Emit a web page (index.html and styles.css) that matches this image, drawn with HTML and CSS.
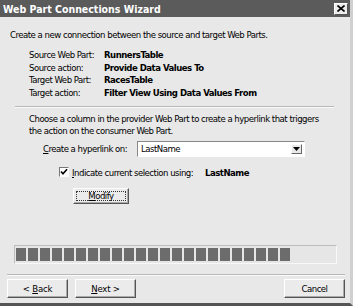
FILE: index.html
```html
<!DOCTYPE html>
<html>
<head>
<meta charset="utf-8">
<link rel="stylesheet" href="styles.css">
</head>
<body>
<div class="window">
  <div class="titlebar">
    <span class="title">Web Part Connections Wizard</span>
    <span class="close">
      <svg width="8" height="7" viewBox="0 0 8 7"><path d="M0.5 0.5L7.5 6.5M7.5 0.5L0.5 6.5" stroke="#000" stroke-width="1.6"/></svg>
    </span>
  </div>
  <div class="content">
    <p class="intro">Create a new connection between the source and target Web Parts.</p>
    <div class="info">
      <span class="lbl">Source Web Part:</span><span class="val">RunnersTable</span>
      <span class="lbl">Source action:</span><span class="val">Provide Data Values To</span>
      <span class="lbl">Target Web Part:</span><span class="val">RacesTable</span>
      <span class="lbl">Target action:</span><span class="val">Filter View Using Data Values From</span>
    </div>
    <div class="sep"></div>
    <p class="choose">Choose a column in the provider Web Part to create a hyperlink that triggers<br>the action on the consumer Web Part.</p>
    <div class="hyper">
      <span class="hlabel"><u>C</u>reate a hyperlink on:</span>
      <div class="select">
        <span class="selval">LastName</span>
        <span class="arrow"><svg width="7" height="4" viewBox="0 0 7 4"><path d="M0 0H7L3.5 4Z" fill="#000"/></svg></span>
      </div>
    </div>
    <div class="check">
      <span class="box"><svg width="8" height="8" viewBox="0 0 8 8"><path d="M1 3.5L3 5.8L7 1.2" stroke="#000" stroke-width="1.6" fill="none"/></svg></span>
      <span class="clabel"><u>I</u>ndicate current selection using:</span>
      <span class="cval">LastName</span>
    </div>
    <div class="modrow"><button class="btn modify"><span class="focus"><u>M</u>odify</span></button></div>
    <div class="progress">
      <div class="blk"></div><div class="blk"></div><div class="blk"></div><div class="blk"></div><div class="blk"></div><div class="blk"></div><div class="blk"></div><div class="blk"></div><div class="blk"></div><div class="blk"></div><div class="blk"></div><div class="blk"></div><div class="blk"></div><div class="blk"></div><div class="blk"></div><div class="blk"></div><div class="blk"></div><div class="blk"></div><div class="blk"></div><div class="blk"></div><div class="blk"></div><div class="blk"></div><div class="blk"></div>
    </div>
  </div>
  <div class="footer">
    <button class="btn nav"><span class="bt">&lt;&nbsp;<u>B</u>ack</span></button>
    <button class="btn nav"><span class="bt"><u>N</u>ext&nbsp;&gt;</span></button>
    <span class="spacer"></span>
    <button class="btn nav">Cancel</button>
  </div>
</div>
</body>
</html>
```
FILE: styles.css
```css
* { box-sizing: border-box; }
html, body { margin: 0; padding: 0; background: #e8e8e8; }
body { font-family: "DejaVu Sans Condensed", "DejaVu Sans", sans-serif; font-size: 9.5px; letter-spacing: -0.5px; color: #000; }
.window {
  width: 353px; height: 306px;
  background: #e8e8e8;
  border-right: 3px solid #d0d0d0;
  border-bottom: 3px solid #555;
  display: flex; flex-direction: column;
  overflow: hidden;
}
.titlebar {
  height: 17px; flex: none; background: #5b5b5b;
  display: flex; align-items: center; justify-content: space-between;
  padding: 0 2px 0 3px;
}
.title { color: #fff; font-weight: bold; font-size: 10.5px; letter-spacing: 0; }
.close {
  width: 14px; height: 12px; background: #ececec;
  border: 1px solid; border-color: #fff #555 #555 #fff;
  display: flex; align-items: center; justify-content: center;
}
.close svg { display: block; }
.content { flex: 1; padding: 11px 16px 0 10px; display: flex; flex-direction: column; white-space: nowrap; }
p { margin: 0; }
.intro { line-height: 13px; }
.info {
  display: grid; grid-template-columns: 75px auto;
  margin: 8px 0 0 19px; line-height: 12.7px;
}
.val { font-weight: bold; }
.sep { height: 2px; flex: none; border-top: 1px solid #b8b8b8; border-bottom: 1px solid #fafafa; margin: 6px 0 0 5px; }
.choose { margin: 5px 0 0 19px; line-height: 12px; }
.hyper { display: flex; align-items: center; margin: 4px 0 0 33px; }
.hlabel { width: 94px; }
.select {
  width: 168px; height: 16px; background: #fff;
  border: 1px solid; border-color: #888 #fff #fff #888;
  display: flex; align-items: center; justify-content: space-between;
  padding: 0 2px 0 3px;
}
.arrow {
  width: 11px; height: 10px; background: #e8e8e8;
  border: 1px solid; border-color: #fff #666 #666 #fff;
  display: flex; align-items: center; justify-content: center;
}
.arrow svg { display: block; }
.check { display: flex; align-items: center; margin: 10px 0 0 49px; }
.box {
  width: 10px; height: 10px; background: #fff;
  border: 1px solid; border-color: #777 #fff #fff #777;
  display: flex; align-items: center; justify-content: center;
  margin-right: 3px;
}
.box svg { display: block; }
.clabel { width: 133px; }
.cval { font-weight: bold; }
.modrow { margin: 10px 0 0 63px; }
.btn {
  font: inherit; letter-spacing: inherit; color: #000; background: #ebebeb; padding: 0;
  border: 1px solid; border-color: #fff #555 #555 #fff;
  box-shadow: inset -1px -1px 0 #aaa;
  display: flex; align-items: center; justify-content: center;
}
.bt { letter-spacing: -0.2px; white-space: nowrap; }
.modify { width: 56px; height: 16px; padding: 2px; }
.focus { border: 1px dotted #333; width: 100%; height: 100%; display: flex; align-items: center; justify-content: center; }
.progress {
  margin: 41px 0 0 4px; height: 19px; width: 323px; flex: none;
  border: 1px solid; border-color: #bdbdbd #f8f8f8 #f8f8f8 #bdbdbd;
  background: #e6e6e6;
  display: flex; gap: 2px; padding: 2px 0 2px 1px;
}
.blk { width: 10px; background: #6c6c6c; }
.footer {
  flex: none;
  margin: 0 5px 0 7px;
  border-top: 1px solid #b8b8b8;
  box-shadow: inset 0 1px 0 #fafafa;
  padding: 4px 0 5px 0;
  display: flex; gap: 7px;
}
.nav { width: 61px; height: 19px; }
.spacer { flex: 1; }
```
